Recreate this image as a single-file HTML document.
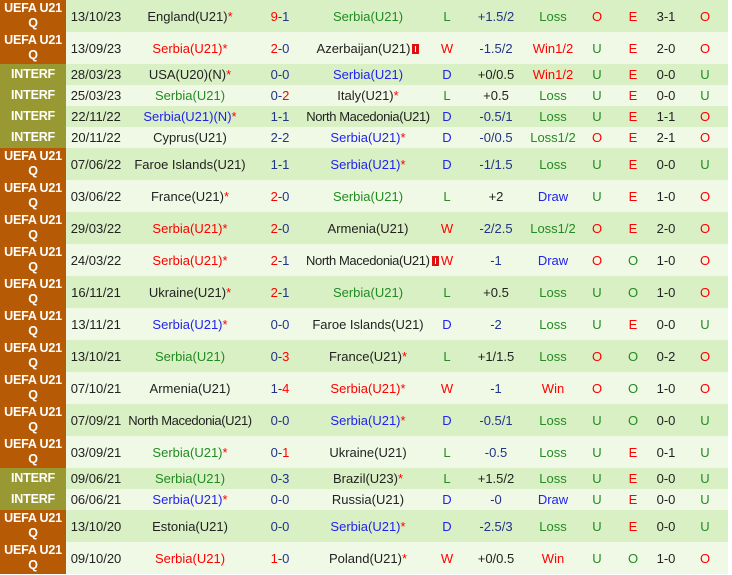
<!DOCTYPE html>
<html><head><meta charset="utf-8"><style>
body{margin:0;background:#fff;font-family:"Liberation Sans",Arial,sans-serif;font-size:13px;}
table{border-collapse:collapse;table-layout:fixed;width:728px;}
td{padding:0;text-align:center;white-space:nowrap;overflow:visible;color:#222;line-height:15px;}
tr.d td{background:#d9efc4;} tr.l td{background:#f0f9e6;}
tr.h2{height:32px;} tr.h1{height:21px;}
tr.h2 td{height:32px;} tr.h1 td{height:21px;}
td.lg{color:#fff;font-weight:bold;font-size:12.5px;line-height:15px;letter-spacing:-0.2px;}
tr td.u{background:#b65a06;} tr td.i{background:#999933;}
.r{color:#f00}.g{color:#228b22}.b{color:#2222ee}.n{color:#222}.nb{color:#223388}
.s{color:#f00}
.t{letter-spacing:-0.4px}
.rc{display:inline-block;width:7px;height:10px;background:#e01010;vertical-align:-1px;margin-left:2px;position:relative}
.rc:after{content:"";position:absolute;left:3px;top:2px;width:1px;height:6px;background:#fff}
</style></head><body>
<table>
<colgroup><col style="width:66px"><col style="width:60px"><col style="width:128px"><col style="width:52px"><col style="width:124px"><col style="width:34px"><col style="width:64px"><col style="width:50px"><col style="width:38px"><col style="width:34px"><col style="width:32px"><col style="width:46px"></colgroup>
<tbody>
<tr class="d h2"><td class="lg u">UEFA U21<br>Q</td><td>13/10/23</td><td class="n">England(U21)<span class="s">*</span></td><td class="nb"><span class="r">9</span>-1</td><td class="g">Serbia(U21)</td><td class="g">L</td><td class="nb">+1.5/2</td><td class="g">Loss</td><td class="r">O</td><td class="r">E</td><td>3-1</td><td class="r">O</td></tr>
<tr class="l h2"><td class="lg u">UEFA U21<br>Q</td><td>13/09/23</td><td class="r">Serbia(U21)<span class="s">*</span></td><td class="nb"><span class="r">2</span>-0</td><td class="n">Azerbaijan(U21)<span class="rc"></span></td><td class="r">W</td><td class="nb">-1.5/2</td><td class="r">Win1/2</td><td class="g">U</td><td class="r">E</td><td>2-0</td><td class="r">O</td></tr>
<tr class="d h1"><td class="lg i">INTERF</td><td>28/03/23</td><td class="n">USA(U20)(N)<span class="s">*</span></td><td class="nb">0-0</td><td class="b">Serbia(U21)</td><td class="b">D</td><td class="n">+0/0.5</td><td class="r">Win1/2</td><td class="g">U</td><td class="r">E</td><td>0-0</td><td class="g">U</td></tr>
<tr class="l h1"><td class="lg i">INTERF</td><td>25/03/23</td><td class="g">Serbia(U21)</td><td class="nb">0-<span class="r">2</span></td><td class="n">Italy(U21)<span class="s">*</span></td><td class="g">L</td><td class="n">+0.5</td><td class="g">Loss</td><td class="g">U</td><td class="r">E</td><td>0-0</td><td class="g">U</td></tr>
<tr class="d h1"><td class="lg i">INTERF</td><td>22/11/22</td><td class="b">Serbia(U21)(N)<span class="s">*</span></td><td class="nb">1-1</td><td class="n t">North Macedonia(U21)</td><td class="b">D</td><td class="nb">-0.5/1</td><td class="g">Loss</td><td class="g">U</td><td class="r">E</td><td>1-1</td><td class="r">O</td></tr>
<tr class="l h1"><td class="lg i">INTERF</td><td>20/11/22</td><td class="n">Cyprus(U21)</td><td class="nb">2-2</td><td class="b">Serbia(U21)<span class="s">*</span></td><td class="b">D</td><td class="nb">-0/0.5</td><td class="g">Loss1/2</td><td class="r">O</td><td class="r">E</td><td>2-1</td><td class="r">O</td></tr>
<tr class="d h2"><td class="lg u">UEFA U21<br>Q</td><td>07/06/22</td><td class="n">Faroe Islands(U21)</td><td class="nb">1-1</td><td class="b">Serbia(U21)<span class="s">*</span></td><td class="b">D</td><td class="nb">-1/1.5</td><td class="g">Loss</td><td class="g">U</td><td class="r">E</td><td>0-0</td><td class="g">U</td></tr>
<tr class="l h2"><td class="lg u">UEFA U21<br>Q</td><td>03/06/22</td><td class="n">France(U21)<span class="s">*</span></td><td class="nb"><span class="r">2</span>-0</td><td class="g">Serbia(U21)</td><td class="g">L</td><td class="n">+2</td><td class="b">Draw</td><td class="g">U</td><td class="r">E</td><td>1-0</td><td class="r">O</td></tr>
<tr class="d h2"><td class="lg u">UEFA U21<br>Q</td><td>29/03/22</td><td class="r">Serbia(U21)<span class="s">*</span></td><td class="nb"><span class="r">2</span>-0</td><td class="n">Armenia(U21)</td><td class="r">W</td><td class="nb">-2/2.5</td><td class="g">Loss1/2</td><td class="r">O</td><td class="r">E</td><td>2-0</td><td class="r">O</td></tr>
<tr class="l h2"><td class="lg u">UEFA U21<br>Q</td><td>24/03/22</td><td class="r">Serbia(U21)<span class="s">*</span></td><td class="nb"><span class="r">2</span>-1</td><td class="n t">North Macedonia(U21)<span class="rc"></span></td><td class="r">W</td><td class="nb">-1</td><td class="b">Draw</td><td class="r">O</td><td class="g">O</td><td>1-0</td><td class="r">O</td></tr>
<tr class="d h2"><td class="lg u">UEFA U21<br>Q</td><td>16/11/21</td><td class="n">Ukraine(U21)<span class="s">*</span></td><td class="nb"><span class="r">2</span>-1</td><td class="g">Serbia(U21)</td><td class="g">L</td><td class="n">+0.5</td><td class="g">Loss</td><td class="g">U</td><td class="g">O</td><td>1-0</td><td class="r">O</td></tr>
<tr class="l h2"><td class="lg u">UEFA U21<br>Q</td><td>13/11/21</td><td class="b">Serbia(U21)<span class="s">*</span></td><td class="nb">0-0</td><td class="n">Faroe Islands(U21)</td><td class="b">D</td><td class="nb">-2</td><td class="g">Loss</td><td class="g">U</td><td class="r">E</td><td>0-0</td><td class="g">U</td></tr>
<tr class="d h2"><td class="lg u">UEFA U21<br>Q</td><td>13/10/21</td><td class="g">Serbia(U21)</td><td class="nb">0-<span class="r">3</span></td><td class="n">France(U21)<span class="s">*</span></td><td class="g">L</td><td class="n">+1/1.5</td><td class="g">Loss</td><td class="r">O</td><td class="g">O</td><td>0-2</td><td class="r">O</td></tr>
<tr class="l h2"><td class="lg u">UEFA U21<br>Q</td><td>07/10/21</td><td class="n">Armenia(U21)</td><td class="nb">1-<span class="r">4</span></td><td class="r">Serbia(U21)<span class="s">*</span></td><td class="r">W</td><td class="nb">-1</td><td class="r">Win</td><td class="r">O</td><td class="g">O</td><td>1-0</td><td class="r">O</td></tr>
<tr class="d h2"><td class="lg u">UEFA U21<br>Q</td><td>07/09/21</td><td class="n t">North Macedonia(U21)</td><td class="nb">0-0</td><td class="b">Serbia(U21)<span class="s">*</span></td><td class="b">D</td><td class="nb">-0.5/1</td><td class="g">Loss</td><td class="g">U</td><td class="g">O</td><td>0-0</td><td class="g">U</td></tr>
<tr class="l h2"><td class="lg u">UEFA U21<br>Q</td><td>03/09/21</td><td class="g">Serbia(U21)<span class="s">*</span></td><td class="nb">0-<span class="r">1</span></td><td class="n">Ukraine(U21)</td><td class="g">L</td><td class="nb">-0.5</td><td class="g">Loss</td><td class="g">U</td><td class="r">E</td><td>0-1</td><td class="g">U</td></tr>
<tr class="d h1"><td class="lg i">INTERF</td><td>09/06/21</td><td class="g">Serbia(U21)</td><td class="nb">0-3</td><td class="n">Brazil(U23)<span class="s">*</span></td><td class="g">L</td><td class="n">+1.5/2</td><td class="g">Loss</td><td class="g">U</td><td class="r">E</td><td>0-0</td><td class="g">U</td></tr>
<tr class="l h1"><td class="lg i">INTERF</td><td>06/06/21</td><td class="b">Serbia(U21)<span class="s">*</span></td><td class="nb">0-0</td><td class="n">Russia(U21)</td><td class="b">D</td><td class="nb">-0</td><td class="b">Draw</td><td class="g">U</td><td class="r">E</td><td>0-0</td><td class="g">U</td></tr>
<tr class="d h2"><td class="lg u">UEFA U21<br>Q</td><td>13/10/20</td><td class="n">Estonia(U21)</td><td class="nb">0-0</td><td class="b">Serbia(U21)<span class="s">*</span></td><td class="b">D</td><td class="nb">-2.5/3</td><td class="g">Loss</td><td class="g">U</td><td class="r">E</td><td>0-0</td><td class="g">U</td></tr>
<tr class="l h2"><td class="lg u">UEFA U21<br>Q</td><td>09/10/20</td><td class="r">Serbia(U21)</td><td class="nb"><span class="r">1</span>-0</td><td class="n">Poland(U21)<span class="s">*</span></td><td class="r">W</td><td class="n">+0/0.5</td><td class="r">Win</td><td class="g">U</td><td class="g">O</td><td>1-0</td><td class="r">O</td></tr>
</tbody></table>
</body></html>
